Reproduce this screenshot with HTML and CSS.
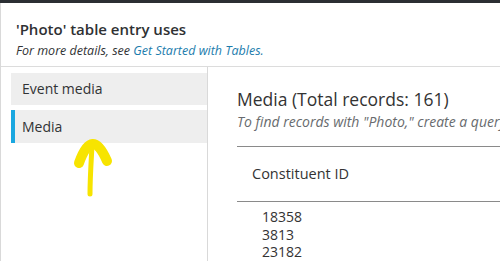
FILE: index.html
```html
<!DOCTYPE html>
<html>
<head>
<meta charset="utf-8">
<link rel="stylesheet" href="styles.css">
</head>
<body>
<div class="topbar"></div>
<div class="modal">
  <header class="head">
    <h1 class="title">'Photo' table entry uses</h1>
    <p class="sub">For more details, see <a class="link">Get Started with Tables.</a></p>
  </header>
  <div class="main">
    <nav class="nav">
      <div class="item">Event media</div>
      <div class="item active">Media</div>
      <svg class="arrow" width="45" height="70" viewBox="0 0 45 70">
        <path d="M9 29 Q22 -8 37 27" fill="none" stroke="#f7e400" stroke-width="10" stroke-linecap="round" stroke-linejoin="round"/>
        <path d="M22 12 C21 30 20 45 20 60" fill="none" stroke="#f7e400" stroke-width="5" stroke-linecap="round"/>
      </svg>
    </nav>
    <section class="content">
      <h2 class="ctitle">Media (Total records: 161)</h2>
      <p class="hint">To find records with "Photo," create a query with criteria for this table entry.</p>
      <div class="table">
        <div class="th">Constituent ID</div>
        <div class="rows">
          <div class="td">18358</div>
          <div class="td">3813</div>
          <div class="td">23182</div>
        </div>
      </div>
    </section>
  </div>
</div>
</body>
</html>
```
FILE: styles.css
```css
html, body {
  margin: 0;
  padding: 0;
  background: #fff;
  overflow: hidden;
}
body {
  font-family: "Open Sans", "Liberation Sans", sans-serif;
  color: #313335;
  width: 500px;
  height: 261px;
}
.topbar {
  height: 3px;
  background: #2b2f33;
}
.modal {
  border-left: 1px solid #d9d9d9;
  height: 258px;
  display: flex;
  flex-direction: column;
}
.head {
  padding: 16px 0 0 15px;
  height: 47px;
  border-bottom: 1px solid #dcdcdc;
}
.title {
  margin: 0;
  font-size: 15px;
  font-weight: 600;
  line-height: 20px;
  color: #2f3133;
}
.sub {
  margin: 4px 0 0;
  font-size: 12.5px;
  font-style: italic;
  line-height: 16px;
  color: #313335;
}
.link {
  color: #1c7cad;
}
.main {
  flex: 1;
  display: flex;
}
.nav {
  width: 196px;
  padding: 6px 0 0 10px;
  border-right: 1px solid #d9d9d9;
  display: flex;
  flex-direction: column;
  gap: 5px;
  position: relative;
}
.item {
  height: 32px;
  background: #eeeeee;
  font-size: 14px;
  line-height: 32px;
  padding-left: 11px;
  color: #313335;
}
.item.active {
  height: 33px;
  line-height: 33px;
  border-left: 4px solid #1aa7e0;
  padding-left: 7px;
}
.arrow {
  position: absolute;
  left: 69px;
  top: 67px;
}
.content {
  flex: 1;
  padding: 21px 0 0 29px;
  overflow: hidden;
  white-space: nowrap;
}
.ctitle {
  margin: 0;
  font-size: 17.5px;
  font-weight: 400;
  line-height: 22px;
  color: #333;
}
.hint {
  margin: 3px 0 0;
  font-size: 14px;
  font-style: italic;
  line-height: 18px;
  color: #686b6e;
}
.table {
  margin-top: 15px;
  border-top: 1px solid #8a8a8a;
}
.th {
  height: 54px;
  line-height: 54px;
  padding-left: 15px;
  font-size: 14.5px;
  color: #333;
  border-bottom: 1px solid #8a8a8a;
}
.rows {
  padding: 6px 0 0 25px;
}
.td {
  font-size: 14px;
  line-height: 17.5px;
  color: #333;
}
```
